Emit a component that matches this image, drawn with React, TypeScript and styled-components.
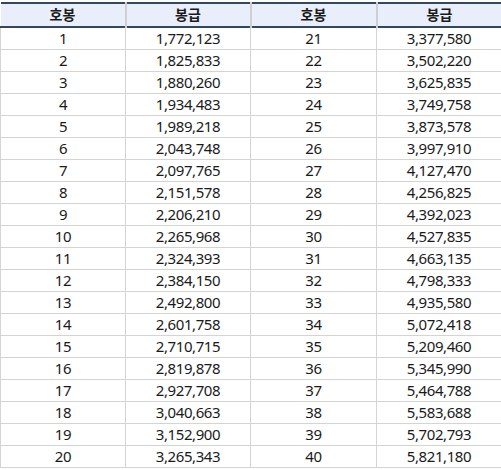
import React from 'react';
import styled, { createGlobalStyle } from 'styled-components';

const GlobalStyle = createGlobalStyle`
  body {
    margin: 0;
    background: #ffffff;
    font-family: "Noto Sans", "Noto Sans CJK KR", sans-serif;
  }
`;

const steps = [
  1772123, 1825833, 1880260, 1934483, 1989218, 2043748, 2097765, 2151578, 2206210, 2265968,
  2324393, 2384150, 2492800, 2601758, 2710715, 2819878, 2927708, 3040663, 3152900, 3265343,
  3377580, 3502220, 3625835, 3749758, 3873578, 3997910, 4127470, 4256825, 4392023, 4527835,
  4663135, 4798333, 4935580, 5072418, 5209460, 5345990, 5464788, 5583688, 5702793, 5821180,
];

const fmt = (n: number) => n.toLocaleString('en-US');

const Wrapper = styled.div`
  padding-top: 2px;
`;

const Table = styled.table`
  width: 501px;
  border-collapse: collapse;
  table-layout: fixed;
  font-size: 15px;
  color: #1a1a1a;
`;

const HeadRow = styled.tr`
  background: #e8effb;
  border-top: 2px solid #35475a;
  border-bottom: 2px solid #35475a;
`;

const Th = styled.th`
  height: 22px;
  padding: 0;
  font-weight: 700;
  font-size: 14px;
  line-height: 22px;
  text-align: center;
  border-left: 2px solid #cfcfcf;
  &:first-child {
    border-left: none;
  }
`;

const Td = styled.td`
  height: 21px;
  padding: 0;
  text-align: center;
  letter-spacing: -0.4px;
  border: 1px solid #d4d4d4;
  border-top: none;
  line-height: 21px;
`;

const App = () => {
  const rows = Array.from({ length: 20 }, (_, i) => i);
  return (
    <>
      <GlobalStyle />
      <Wrapper>
        <Table>
          <colgroup>
            <col style={{ width: 125 }} />
            <col style={{ width: 125 }} />
            <col style={{ width: 126 }} />
            <col style={{ width: 125 }} />
          </colgroup>
          <thead>
            <HeadRow>
              <Th>호봉</Th>
              <Th>봉급</Th>
              <Th>호봉</Th>
              <Th>봉급</Th>
            </HeadRow>
          </thead>
          <tbody>
            {rows.map((i) => (
              <tr key={i}>
                <Td>{i + 1}</Td>
                <Td>{fmt(steps[i])}</Td>
                <Td>{i + 21}</Td>
                <Td>{fmt(steps[i + 20])}</Td>
              </tr>
            ))}
          </tbody>
        </Table>
      </Wrapper>
    </>
  );
};

export default App;
